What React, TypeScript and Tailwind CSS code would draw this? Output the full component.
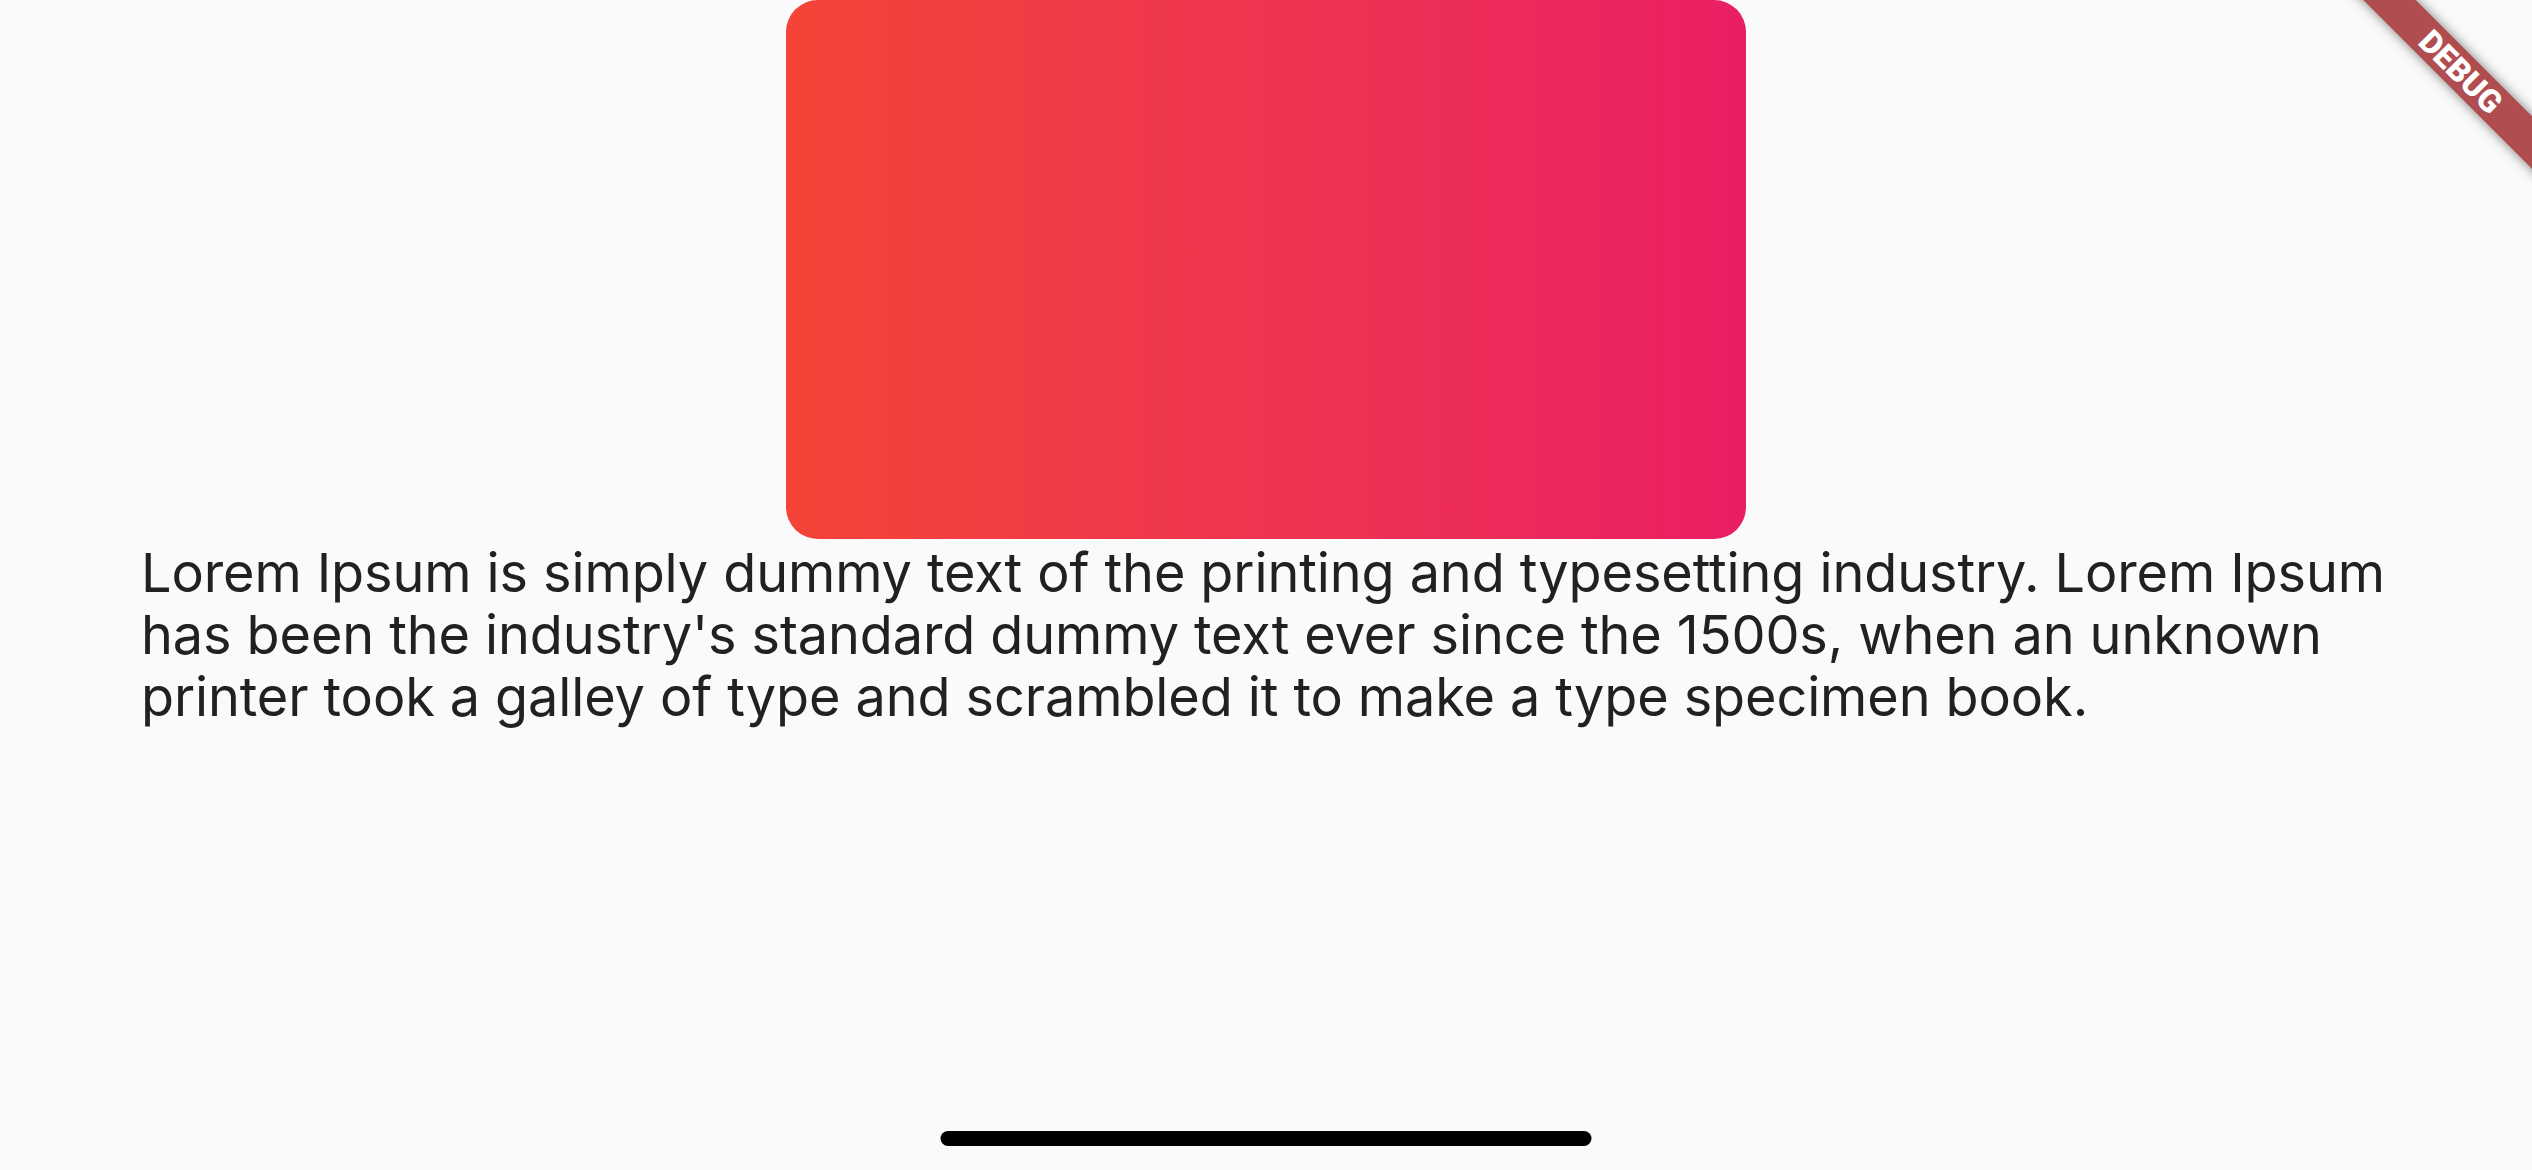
export default function App() {
  return (
    <div className="relative flex h-[1170px] w-full flex-col items-center overflow-hidden bg-[#fafafa] font-[Inter,sans-serif]">
      <div className="h-[539px] w-[960px] shrink-0 rounded-[32px] bg-linear-to-r from-[#f44336] to-[#e91e63]" />
      <p className="mt-[3px] w-full pl-[141px] pr-[110px] text-[54px] leading-[62px] tracking-[-0.1px] text-[#212121]">
        Lorem Ipsum is simply dummy text of the printing and typesetting industry. Lorem Ipsum has been the
        industry's standard dummy text ever since the 1500s, when an unknown printer took a galley of type and
        scrambled it to make a type specimen book.
      </p>

      {/* iOS home indicator */}
      <div className="absolute bottom-[24px] left-1/2 h-[15px] w-[651px] -translate-x-1/2 rounded-full bg-black" />

      {/* debug banner */}
      <div className="absolute left-[2311px] top-[53px] flex h-[37px] w-[300px] rotate-45 items-center justify-center bg-[#b04d50] shadow-[0_0_12px_rgba(0,0,0,0.5)]">
        <span className="font-[Roboto,sans-serif] text-[32px] font-black leading-none text-white">DEBUG</span>
      </div>
    </div>
  )
}
